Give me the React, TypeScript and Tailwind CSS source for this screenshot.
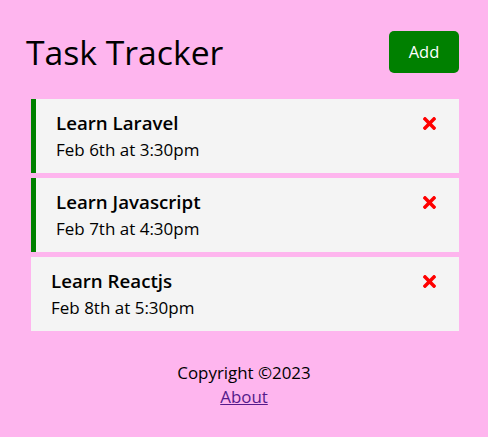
import { FaTimes } from "react-icons/fa";

const tasks = [
  { id: 1, text: "Learn Laravel", day: "Feb 6th at 3:30pm", reminder: true },
  { id: 2, text: "Learn Javascript", day: "Feb 7th at 4:30pm", reminder: true },
  { id: 3, text: "Learn Reactjs", day: "Feb 8th at 5:30pm", reminder: false },
];

export default function App() {
  return (
    <div className="min-h-[437px] bg-[#feb5ee] font-['Open_Sans',sans-serif] text-black">
      <div className="pl-[26px] pr-[29px] pt-[31px]">
        <header className="mb-[26px] flex items-center justify-between">
          <h1 className="text-[33.7px] font-normal leading-[42px]">Task Tracker</h1>
          <button className="h-[42px] w-[70px] rounded-[5px] bg-[#008000] text-[16.5px] text-white">
            Add
          </button>
        </header>
        <div className="flex flex-col gap-[5px] pl-[5px]">
          {tasks.map((t) => (
            <div
              key={t.id}
              className={
                t.reminder
                  ? "border-l-[5px] border-[#008000] bg-[#f4f4f4] py-[10px] pl-[20px] pr-[20px]"
                  : "bg-[#f4f4f4] py-[10px] pl-[20px] pr-[20px]"
              }
            >
              <h3 className="flex h-[28px] items-center justify-between text-[18.72px] font-semibold leading-[28px]">
                <span>{t.text}</span>
                <FaTimes className="text-[#ff0000]" size={19} />
              </h3>
              <p className="text-[17px] leading-[26px]">{t.day}</p>
            </div>
          ))}
        </div>
      </div>
      <footer className="mt-[30px] text-center text-[16.9px] leading-[24px]">
        <p>Copyright ©2023</p>
        <a href="#" className="text-[#551a8b] underline">
          About
        </a>
      </footer>
    </div>
  );
}
